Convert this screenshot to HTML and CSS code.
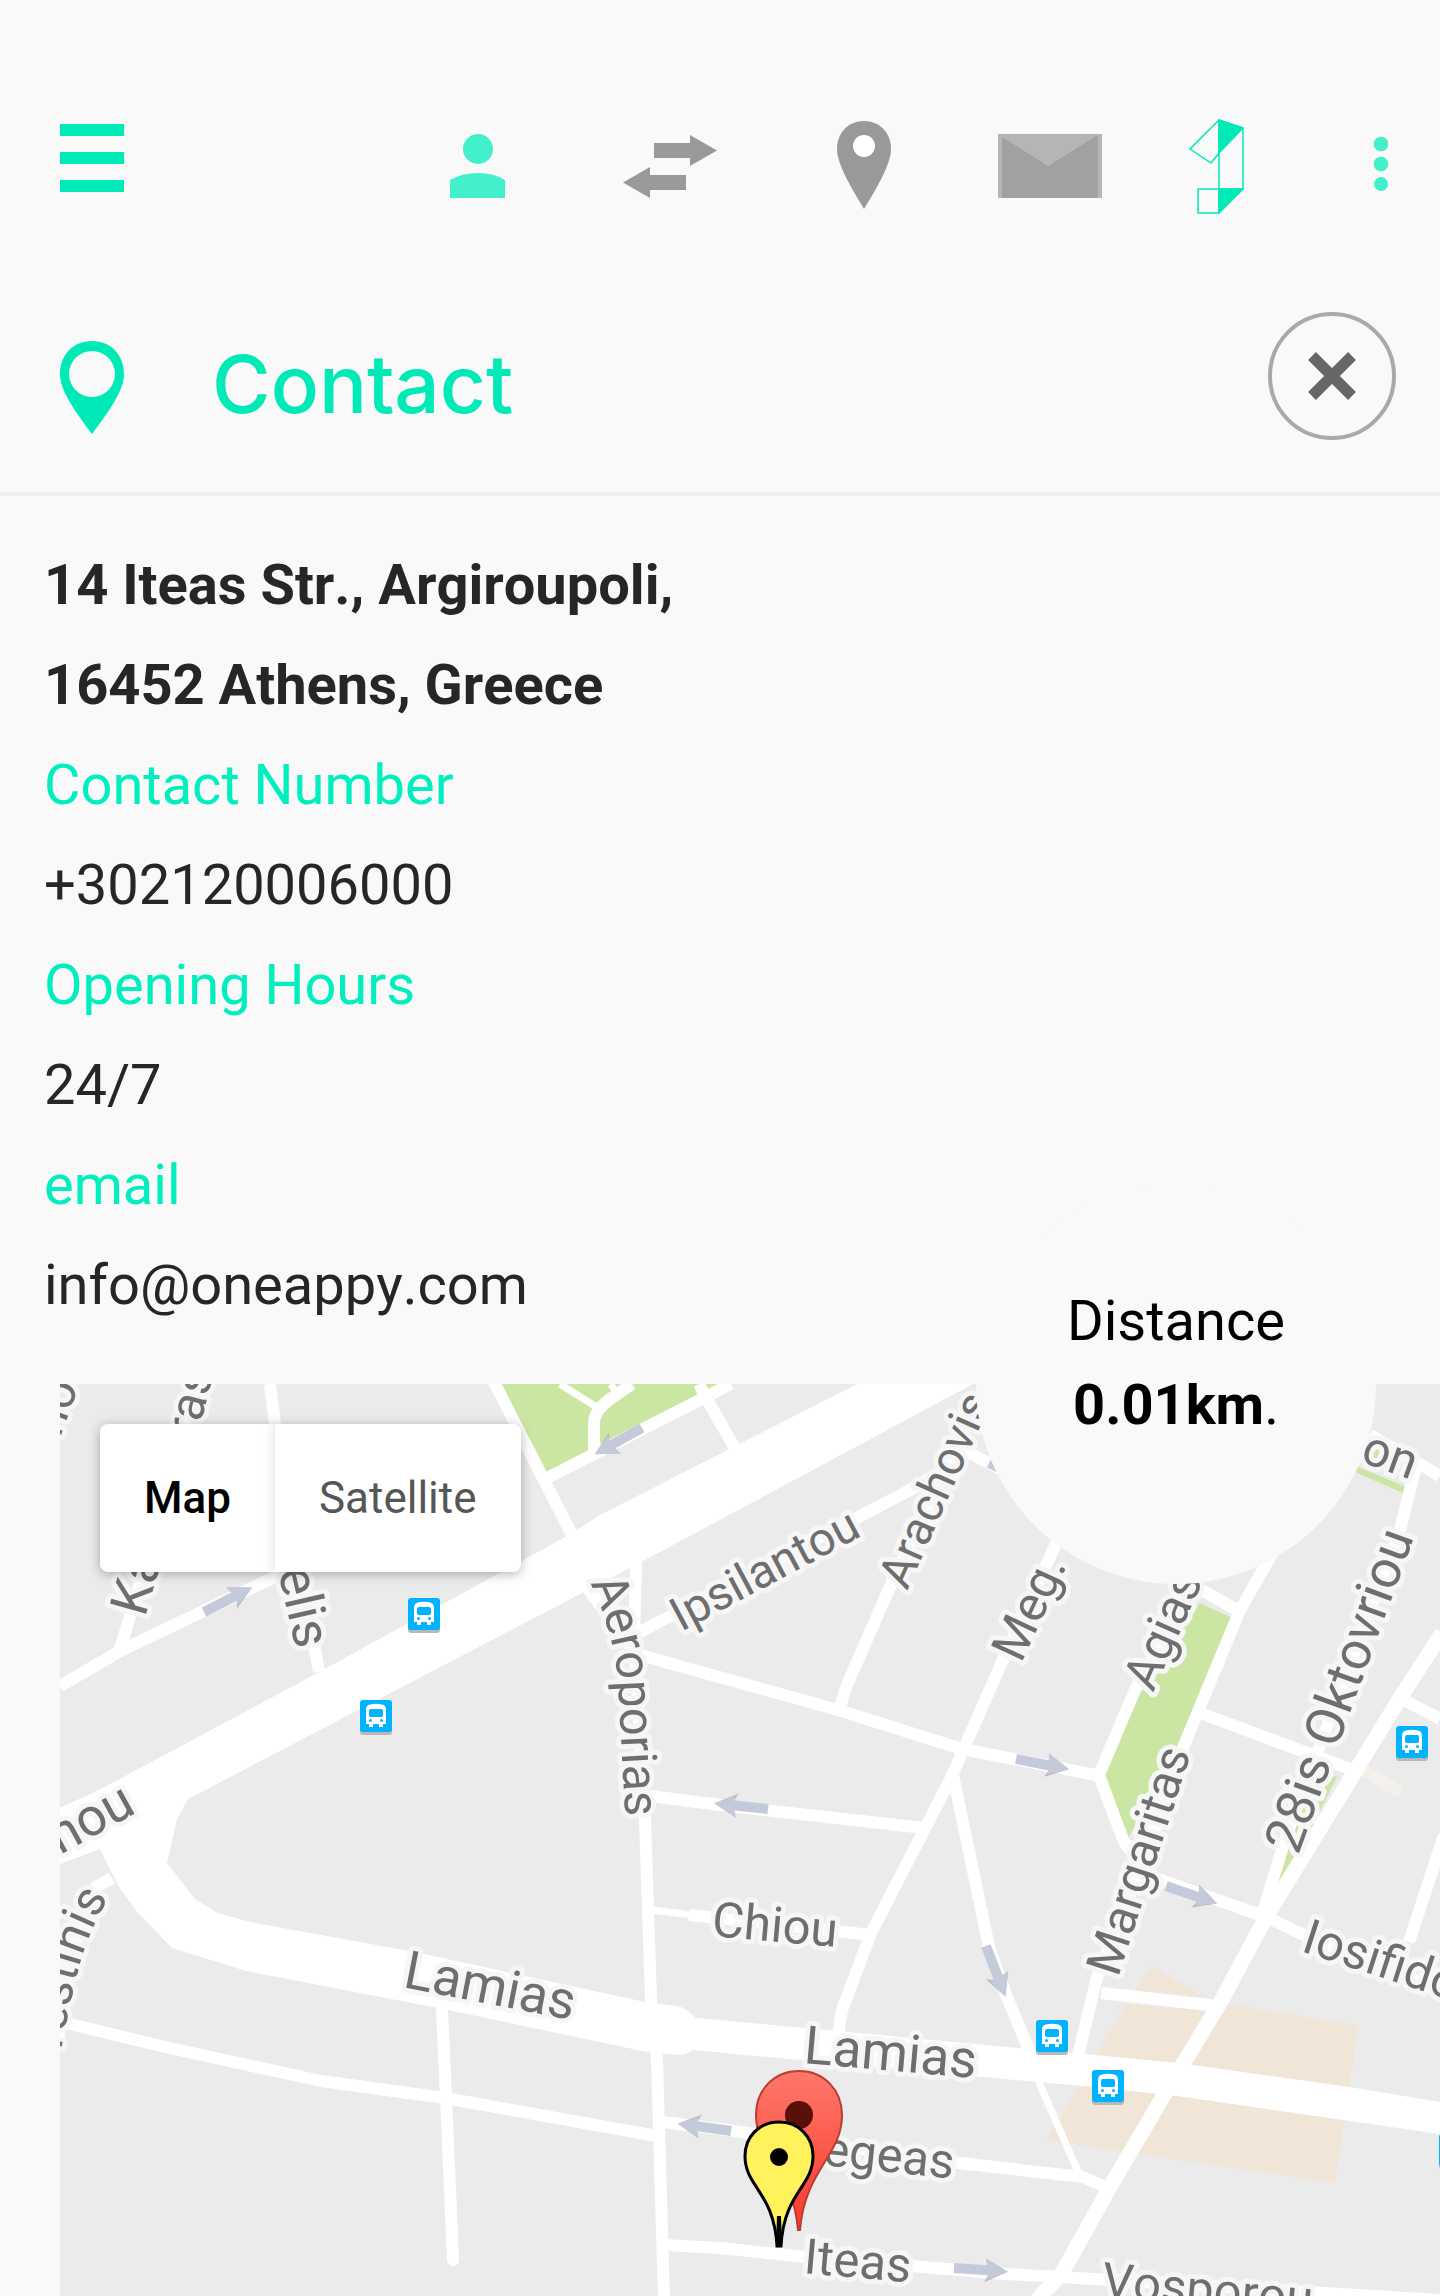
FILE: index.html
```html
<!DOCTYPE html>
<html lang="en">
<head>
<meta charset="utf-8">
<meta name="viewport" content="width=device-width, initial-scale=1">
<title>Contact</title>
<link rel="stylesheet" href="styles.css">
</head>
<body>
<header class="toolbar">
  <button class="tool tool-menu" aria-label="Menu">
    <svg width="64" height="84" viewBox="0 0 64 84" fill="#00eab8"><path d="M0 0h64v12H0zM0 28h64v12H0zM0 56h64v12H0z"/></svg>
  </button>
  <a class="tool" href="#profile" aria-label="Profile">
    <svg width="56" height="64" viewBox="0 0 56 64" fill="#44efcb"><circle cx="28" cy="15" r="15"/><path d="M0 46Q12 39 28 39T55 46V64H0z"/></svg>
  </a>
  <a class="tool" href="#transfer" aria-label="Transfer">
    <svg width="94" height="64" viewBox="0 0 94 64" fill="#999"><path d="M31 9h36V1l27 15.500L67 32v-8H31zM63 41H27v-8L0 48.500 27 64v-8h36z"/></svg>
  </a>
  <a class="tool" href="#location" aria-label="Location">
    <svg width="56" height="90" viewBox="0 0 56 90"><path fill="#999" d="M28 0C12 0 1 12 1 28c0 13 10 32 27 60 17-28 27-47 27-60C55 12 44 0 28 0z"/><circle cx="28" cy="25" r="11" fill="#fff"/></svg>
  </a>
  <a class="tool" href="#mail" aria-label="Mail">
    <svg width="104" height="64" viewBox="0 0 104 64"><path fill="#b5b5b5" d="M0 0h104v64H0z"/><path fill="#a1a1a1" d="M4 3l46 29 50-31v63H4z"/></svg>
  </a>
  <a class="tool" href="#home" aria-label="Home">
    <svg width="56" height="96" viewBox="0 0 56 96" fill="none" stroke="#00eab8" stroke-width="1.500"><path d="M31 2L2 31l21 14 8-10M31 2v93M31 2l24 8v61M10 71h45M10 71v24h21"/><path fill="#00eab8" d="M31 2l24 8-24 25zM31 71h24L31 95z"/></svg>
  </a>
  <button class="tool tool-more" aria-label="More">
    <svg width="16" height="60" viewBox="0 0 16 60" fill="#44efcb"><circle cx="8" cy="8" r="7.300"/><circle cx="8" cy="28" r="7.300"/><circle cx="8" cy="48" r="7"/></svg>
  </button>
</header>

<div class="titlebar">
  <svg class="title-pin" width="66" height="128" viewBox="1 0 66 128"><path fill="#00eab8" fill-rule="evenodd" d="M33 29C14 29 1 43 1 62c0 16 14 36 32 60 18-24 32-44 32-60C65 43 52 29 33 29zm0 10a23 23 0 1 1 0 46 23 23 0 0 1 0-46z"/></svg>
  <h1 class="title">Contact</h1>
  <button class="close" aria-label="Close">
    <svg width="128" height="128" viewBox="0 0 128 128"><circle cx="64" cy="64" r="62" fill="none" stroke="#a9a9a9" stroke-width="4"/><path stroke="#666" stroke-width="11" d="M44 44l40 40M84 44L44 84"/></svg>
  </button>
</div>

<main class="page">
  <section class="info">
    <p class="strong">14 Iteas Str., Argiroupoli,</p>
    <p class="strong">16452 Athens, Greece</p>
    <h2 class="caption">Contact Number</h2>
    <p>+302120006000</p>
    <h2 class="caption">Opening Hours</h2>
    <p>24/7</p>
    <h2 class="caption">email</h2>
    <p>info@oneappy.com</p>
  </section>

  <section class="map">
    <svg class="map-canvas" viewBox="60 1384 1380 912" preserveAspectRatio="xMinYMin slice" role="img" aria-label="Street map">
      <defs>
        <linearGradient id="red" x1="0" y1="0" x2="0" y2="1"><stop offset="0" stop-color="#ff776b"/><stop offset="1" stop-color="#f73a2b"/></linearGradient>
        <g id="arrow"><path fill="#b9babf" d="M31-12L54 0 31 12l6-12z"/><path fill="#c5cadb" d="M0-5h33l-2-7L54 0 34 9V5H0z"/></g>
        <g id="bus">
          <rect x="-16" y="-13" width="32" height="32" rx="3" fill="#b9b9b9"/>
          <rect x="-16" y="-16" width="32" height="32" rx="3" fill="#00b3ff"/>
          <path fill="#fff" d="M-10-6q0-5 4-5.500Q0-13 6-11.500q4 .5 4 5.500V8H7v3H3V8h-6v3h-4V8h-3z"/>
          <rect x="-7" y="-7" width="14" height="8" rx="2" fill="#00b3ff"/><circle cx="-5.500" cy="4.500" r="1.500" fill="#00b3ff"/><circle cx="5.500" cy="4.500" r="1.500" fill="#00b3ff"/>
        </g>
        <path id="aeroporias" d="M590 1583Q613 1630 618 1680L627 1850"/>
        <path id="estinis" d="M58 2070C66 2020 76 1970 88 1940Q97 1916 109 1898"/>
      </defs>
      <rect x="60" y="1384" width="1380" height="912" fill="#ebebeb"/>
      <g fill="#cbe6a3">
        <path d="M499 1384l47 90 172-90zM1200 1603l34 16-59 133-49 90-23-65 32-87zM1312 1785l26-10-69 137 15-60zM1356 1466l50 21-3 6-48-21zM1366 1446l24 8-6 8-20-8z"/>
      </g>
      <path fill="#f0e5d7" d="M1152 1966l52 31-68-7zM1126 2004l83 7 25-6 124 21-23 157-289-43 32-53z"/>
      <path stroke="#f5f0e9" stroke-width="12" stroke-linecap="round" d="M1360 1768l36 22"/>
      <path fill="#fff" d="M60 1808L101 1789 312 1676 569 1535 600 1515 857 1384H973L645 1560 188 1799 177 1819 167 1863 195 1899 218 1913 250 1922 415 1952 645 2002 677 2006Q686 2007 695 2018L720 2020 1018 2048 1083 2054 1179 2063 1349 2087 1440 2102V2134L1170 2095 1083 2086 982 2077 693 2050Q686 2055 680 2055L647 2052 448 2010 246 1971 172 1948 138 1913 119 1887 100 1849 60 1864z"/>
      <g class="roads">
        <path d="M60 1686L122 1650 300 1565M118 1655L133 1607 196 1384M270 1384L275 1424 319 1672"/>
        <path d="M493 1380L572 1535M731 1384L549 1477M632 1384L613 1397Q594 1410 594 1423V1452M699 1384L705 1396 736 1450"/>
        <path d="M636 1558L634 1640 645 1820 651 2000 657 2060 664 2300M583 1582L640 1660"/>
        <path d="M640 1632L910 1490 950 1466M986 1384L893 1580 847 1685 839 1710M955 1445L1000 1469"/>
        <path d="M640 1655L838 1710 962 1749 1101 1776M1060 1535L1005 1655 950 1780 871 1933 842 2010 838 2036"/>
        <path d="M953 1775L989 1947 1007 1997 1031 2055M1195 1585L1135 1690 1099 1775 1124 1842 1152 1877 1266 1917 1308 1937 1440 1990"/>
        <path d="M1280 1540L1240 1610 1180 1755 1148 1850 1097 1977 1077 2060M1195 1586L1240 1612M1203 1714L1353 1770"/>
        <path d="M1370 1435L1440 1476M1417 1462L1400 1530 1320 1745 1285 1840 1262 1915M1400 1698L1440 1719M1444 1835L1409 1942"/>
        <path d="M1101 1993L1218 2006M663 2122L720 2129 959 2163 1083 2177 1108 2188M664 2245L720 2248 807 2257 1005 2274 1060 2277 1440 2300"/>
        <path d="M66 2023L165 2047 321 2081 445 2098 657 2136M112 1878L96 1887 84 1910 72 1960 58 2040M650 1796L720 1805 924 1828M689 1915L871 1935"/>
        <path stroke-linecap="round" d="M442 2010L446 2097 453 2260"/>
        <path class="wide" d="M1442 1633L1400 1698 1353 1775 1266 1917 1220 2003 1161 2100 1110 2187 1062 2273 1037 2300"/>
        <path class="thin" d="M560 1384L598 1408M611 1384L616 1393M652 1910L692 1915M1038 2080L1079 2174"/>
      </g>
      <use href="#arrow" transform="translate(642 1428) rotate(151)"/>
      <use href="#arrow" transform="translate(204 1612) rotate(-27)"/>
      <use href="#arrow" transform="translate(1016 1759) rotate(11)"/>
      <use href="#arrow" transform="translate(768 1809) rotate(186)"/>
      <use href="#arrow" transform="translate(1166 1886) rotate(19)"/>
      <use href="#arrow" transform="translate(986 1946) rotate(69)"/>
      <use href="#arrow" transform="translate(731 2131) rotate(188)"/>
      <use href="#arrow" transform="translate(954 2268) rotate(4)"/>
      <use href="#arrow" transform="translate(989 1463) rotate(25)"/>
      <g class="streets">
        <text transform="translate(60 1438) rotate(-70)">no</text>
        <text transform="translate(197 1439) rotate(-76)">ras</text>
        <text class="large" transform="translate(145 1618) rotate(-74)">Ka</text>
        <text class="large" transform="translate(278 1571) rotate(77)">elis</text>
        <text><textPath href="#aeroporias">Aeroporias</textPath></text>
        <text><textPath href="#estinis" startOffset="100%" text-anchor="end">restinis</textPath></text>
        <text class="small" transform="translate(681 1632) rotate(-28)">Ipsilantou</text>
        <text class="small" transform="translate(907 1591) rotate(-66)">Arachovis</text>
        <text transform="translate(1021 1664) rotate(-65)">Meg.</text>
        <text transform="translate(1153 1693) rotate(-66)">Agias</text>
        <text transform="translate(1118 1978) rotate(-72)">Margaritas</text>
        <text class="large" transform="translate(1298 1856) rotate(-70)">28is Oktovriou</text>
        <text transform="translate(1359 1461) rotate(20)">on</text>
        <text transform="translate(1300 1951) rotate(18)">Iosifidou</text>
        <text transform="translate(711 1936) rotate(5)">Chiou</text>
        <text class="large" transform="translate(60 1855) rotate(-29)">nou</text>
        <text class="large" transform="translate(402 1987) rotate(11)">Lamias</text>
        <text class="large" transform="translate(803 2063) rotate(5)">Lamias</text>
        <text transform="translate(822 2165) rotate(6)">egeas</text>
        <text transform="translate(803 2273) rotate(5)">Iteas</text>
        <text transform="translate(1101 2297) rotate(5)">Vosporou</text>
      </g>
      <use href="#bus" x="424" y="1614"/>
      <use href="#bus" x="376" y="1716"/>
      <use href="#bus" x="1412" y="1742"/>
      <use href="#bus" x="1052" y="2036"/>
      <use href="#bus" x="1108" y="2086"/>
      <use href="#bus" x="1455" y="2150"/>
      <path fill="url(#red)" stroke="#bd3c32" stroke-width="2" d="M799 2071c-25 0-43 19-43 44 0 41 37 54 42 115h2c5-61 42-74 42-115 0-25-18-44-43-44z"/>
      <circle cx="799" cy="2115" r="14" fill="#590f0a"/>
      <path fill="#fff25c" stroke="#000" stroke-width="3" d="M779 2122c-20 0-34 15-34 34 0 31 29 36 32 90h4c3-54 32-59 32-90 0-19-14-34-34-34z"/>
      <path fill="#000" d="M777 2216h4l1 31h-6z"/>
      <circle cx="779" cy="2157" r="9" fill="#000"/>
    </svg>

    <div class="map-type">
      <button class="type active">Map</button>
      <button class="type">Satellite</button>
    </div>

    <div class="distance">
      <p>Distance</p>
      <p><b>0.01km</b>.</p>
    </div>
  </section>
</main>
</body>
</html>
```
FILE: styles.css
```css
* {
  box-sizing: border-box;
}

body {
  margin: 0;
  min-height: 100vh;
  display: flex;
  flex-direction: column;
  background: #f9f9f9;
  color: #262626;
  font-family: Roboto, "Liberation Sans", sans-serif;
  font-size: 56px;
  font-kerning: none;
  overflow-x: hidden;
}

p,
h1,
h2 {
  margin: 0;
}

button {
  margin: 0;
  padding: 0;
  border: 0;
  background: none;
  font: inherit;
  cursor: pointer;
}

svg {
  display: block;
}

.toolbar {
  display: grid;
  grid-template-columns: 382fr 192fr 192fr 196fr 176fr 156fr 146fr;
  align-items: center;
  padding-top: 118px;
}

.tool {
  display: flex;
  justify-content: center;
}

.tool-menu {
  justify-content: flex-start;
  padding-left: 60px;
}

.tool-more {
  justify-content: flex-end;
  padding-right: 51px;
}

.titlebar {
  display: flex;
  align-items: center;
  padding: 98px 44px 52px 60px;
  border-bottom: 4px solid #eee;
}

.title {
  flex: 1;
  padding: 16px 0 0 86px;
  color: #00eab8;
  font-family: Inter, sans-serif;
  font-size: 80px;
  font-weight: 500;
  line-height: 88px;
}

.page {
  flex: 1;
  display: flex;
  flex-direction: column;
}

.info {
  padding: 39px 44px 49px;
  line-height: 100px;
}

.strong {
  font-weight: 700;
}

.caption {
  color: #00efbf;
  font-size: 56px;
  font-weight: 400;
}

.map {
  position: relative;
  flex: 1;
  min-height: 600px;
  margin-left: 60px;
}

.map-canvas {
  position: absolute;
  inset: 0;
  width: 100%;
  height: 100%;
}

.roads {
  fill: none;
  stroke: #fff;
  stroke-width: 12px;
  stroke-linejoin: round;
}

.roads .wide {
  stroke-width: 15px;
}

.roads .thin {
  stroke-width: 7px;
}

.streets {
  fill: #6e6e6e;
  stroke: #f6f6f6;
  stroke-width: 10px;
  stroke-linejoin: round;
  paint-order: stroke;
  font-size: 49px;
}

.streets .small {
  font-size: 47px;
}

.streets .large {
  font-size: 53px;
}

.map-type {
  position: absolute;
  top: 40px;
  left: 40px;
  display: flex;
  border-radius: 8px;
  box-shadow: 0 2px 12px rgba(0, 0, 0, 0.3);
  overflow: hidden;
  background: #fff;
  font-size: 44px;
}

.type {
  height: 148px;
  padding: 0 44px;
  color: #565656;
  line-height: 52px;
}

.type + .type {
  box-shadow: 0 0 12px rgba(0, 0, 0, 0.15);
}

.type.active {
  color: #000;
  font-weight: 500;
}

.distance {
  position: absolute;
  top: -200px;
  right: 64px;
  width: 400px;
  height: 400px;
  padding-top: 95px;
  border-radius: 50%;
  background: #f9f9f9;
  color: #000;
  line-height: 84px;
  text-align: center;
}
```
